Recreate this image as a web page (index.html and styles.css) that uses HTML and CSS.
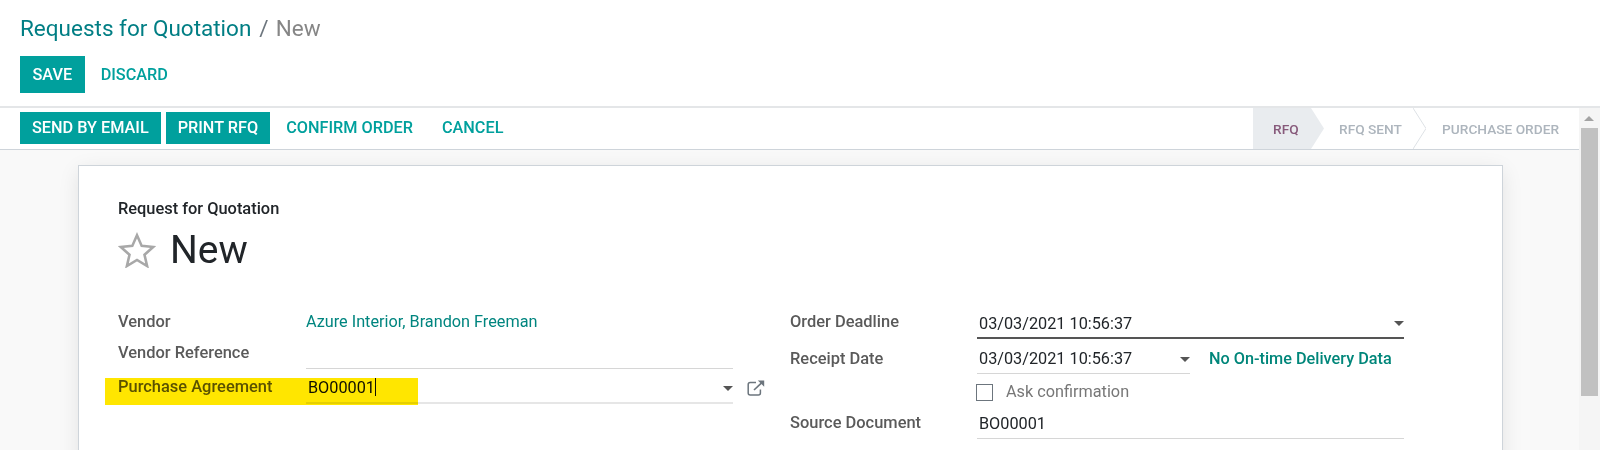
FILE: index.html
```html
<!DOCTYPE html>
<html lang="en">
<head>
<meta charset="utf-8">
<title>Requests for Quotation</title>
<link rel="stylesheet" href="styles.css">
</head>
<body>
<div class="app">
  <header class="control">
    <div class="crumbs"><a class="crumb-link">Requests for Quotation</a><span class="crumb-sep">/</span><span class="crumb-cur">New</span></div>
    <div class="actions">
      <button class="btn primary save">SAVE</button>
      <button class="btn link discard">DISCARD</button>
    </div>
  </header>
  <div class="main">
    <div class="content">
      <div class="statusbar">
        <div class="state-actions">
          <button class="btn primary">SEND BY EMAIL</button>
          <button class="btn primary">PRINT RFQ</button>
          <button class="btn link first-link">CONFIRM ORDER</button>
          <button class="btn link">CANCEL</button>
        </div>
        <div class="steps">
          <div class="step active">RFQ
            <svg class="arrow" viewBox="0 0 13 41" width="13" height="41"><path d="M0 0L13 20.5L0 41Z" fill="#e9ecef"/></svg>
          </div>
          <div class="step middle">RFQ SENT
            <svg class="arrow" viewBox="0 0 13 41" width="13" height="41"><path d="M0 0L13 20.5L0 41" fill="#fff" stroke="#dee2e6"/></svg>
          </div>
          <div class="step last">PURCHASE ORDER</div>
        </div>
      </div>
      <div class="sheet-wrap">
        <section class="sheet">
          <div class="kind">Request for Quotation</div>
          <h1 class="title">
            <svg class="star" viewBox="0 0 38 36" width="38" height="36"><path d="M19 3.2L23.7 13.9L35.2 15L26.5 22.7L29.1 34L19 28L8.9 34L11.5 22.7L2.8 15L14.3 13.9Z" fill="none" stroke="#a8a8a8" stroke-width="2.6" stroke-linejoin="miter"/></svg>
            <span>New</span>
          </h1>
          <div class="columns">
            <div class="col col-left">
              <div class="field f-vendor"><label>Vendor</label><a class="value-link">Azure Interior, Brandon Freeman</a></div>
              <div class="field f-ref"><label>Vendor Reference</label><div class="input"></div></div>
              <div class="field f-agr"><label>Purchase Agreement</label>
                <div class="input thick"><span class="typed">BO00001</span><span class="caret"></span><i class="drop"></i></div>
                <svg class="ext" viewBox="0 0 18 16" width="18" height="16"><path d="M9 2.6H3.2Q1.2 2.6 1.2 4.6V13Q1.2 15 3.2 15H11.4Q13.4 15 13.4 13V9.6" fill="none" stroke="#6c757d" stroke-width="1.5"/><path d="M7 10L15.4 2.2" fill="none" stroke="#6c757d" stroke-width="1.7"/><path d="M10.8 0.6H17.2V6.8Z" fill="#6c757d"/></svg>
              </div>
              <div class="highlight"></div>
            </div>
            <div class="col col-right">
              <div class="field f-deadline"><label>Order Deadline</label><div class="input active">03/03/2021 10:56:37<i class="drop"></i></div></div>
              <div class="field f-receipt"><label>Receipt Date</label>
                <div class="receipt-row">
                  <div class="input short">03/03/2021 10:56:37<i class="drop"></i></div>
                  <a class="ontime">No On-time Delivery Data</a>
                </div>
              </div>
              <div class="field f-ask"><span></span><div class="check"><span class="box"></span><span>Ask confirmation</span></div></div>
              <div class="field f-source"><label>Source Document</label><div class="input">BO00001</div></div>
            </div>
          </div>
        </section>
      </div>
    </div>
    <div class="scrollbar"><i class="up"></i><div class="thumb"></div></div>
  </div>
</div>
</body>
</html>
```
FILE: styles.css
```css
* { box-sizing: border-box; }
html, body { margin: 0; height: 100%; overflow: hidden; }
body { font-family: Roboto, "Noto Sans", sans-serif; font-size: 16.25px; color: #212529; background: #fff; }
.app { height: 450px; display: flex; flex-direction: column; }
.control { height: 108px; flex: none; padding: 14px 20px 0 20px; border-bottom: 2px solid #e4e6e8; background: #fff; }
.crumbs { font-size: 22.5px; line-height: 28px; height: 28px; display: flex; }
.crumb-link { color: #017e84; }
.crumb-sep { color: #6c757d; margin: 0 7px 0 8px; }
.crumb-cur { color: #868686; }
.actions { margin-top: 14px; display: flex; }
.btn { font-family: inherit; font-size: 16.25px; font-weight: 500; border: 0; background: none; padding: 0 12px 1px; cursor: pointer; }
.primary { background: #00a09d; color: #fff; height: 32px; }
.link { color: #00a09d; height: 32px; }
.save { height: 37px; padding: 0 12.5px; }
.discard { height: 37px; margin-left: 4px; padding-bottom: 0; }
.main { flex: 1; display: flex; min-height: 0; }
.content { flex: 1; min-width: 0; display: flex; flex-direction: column; background: #f9f9f9; }
.statusbar { height: 42px; flex: none; background: #fff; border-bottom: 1px solid #ced4da; display: flex; justify-content: space-between; padding-left: 20px; }
.state-actions { display: flex; gap: 5px; padding-top: 4px; align-items: flex-start; }
.first-link { margin-left: -1px; }
.steps { display: flex; height: 41px; font-size: 13.7px; font-weight: 500; color: #adb5bd; }
.step { position: relative; display: flex; align-items: center; }
.step.active { background: #e9ecef; color: #875a7b; width: 58px; padding-left: 20px; }
.step.middle { width: 102px; padding-left: 28px; }
.step.last { padding: 0 20px 0 29px; }
.arrow { position: absolute; left: 100%; top: 0; height: 41px; z-index: 1; }
.sheet-wrap { flex: 1; min-height: 0; overflow: hidden; padding: 15px 76px 0 78px; }
.sheet { background: #fff; border: 1px solid #ced4da; border-bottom: 0; height: 400px; padding: 33px 40px 0 39px; box-shadow: 0 5px 20px -1px rgba(0,0,0,.1); }
.kind { font-size: 16.4px; font-weight: 500; line-height: 20px; color: #212529; }
.title { margin: 7px 0 0 0; font-size: 39px; font-weight: 400; line-height: 48px; height: 48px; display: flex; align-items: center; gap: 14px; color: #212529; }
.columns { display: grid; grid-template-columns: 652px 614px; gap: 20px; margin-top: 36px; }
.col { position: relative; }
.field { display: grid; align-items: start; }
.col-left .field { grid-template-columns: 188px 427px; }
.col-right .field { grid-template-columns: 187px 427px; }
label { font-size: 16.45px; font-weight: 500; color: #5a5a5a; line-height: 22px; }
.value-link { color: #00857f; line-height: 22px; margin-top: 1px; }
.input { position: relative; border-bottom: 1px solid #d6d6d6; line-height: 22px; color: #212529; }
.f-vendor { height: 31px; }
.f-vendor label, .f-ref label, .f-deadline label, .f-receipt label { margin-top: 1px; }
.f-ref { height: 28px; }
.f-ref .input { height: 28px; }
.f-agr { position: relative; height: 35px; }
.f-agr .input { height: 35px; border-bottom: 2px solid #e6e6e6; padding: 8px 0 0 2px; }
.f-agr label { margin-top: 7px; }
.typed { color: #111; }
.caret { display: inline-block; width: 1px; height: 18px; background: #111; vertical-align: -3px; }
.drop { position: absolute; right: 0; top: 17px; width: 0; height: 0; border: 5px solid transparent; border-top-color: #555; border-bottom: 0; }
.ext { position: absolute; left: 629px; top: 11px; }
.highlight { position: absolute; left: -13px; top: 68px; width: 313px; height: 27px; background: #ffe600; mix-blend-mode: multiply; }
.f-deadline { height: 37px; }
.f-deadline .input { border-bottom: 2px solid #555; height: 29px; padding: 3px 0 0 2px; }
.f-deadline .drop { top: 11px; }
.receipt-row { display: flex; align-items: flex-start; gap: 19px; }
.short { width: 213px; height: 27px; padding: 1px 0 0 2px; }
.short .drop { top: 10px; }
.ontime { color: #00867a; font-weight: 500; line-height: 22px; white-space: nowrap; padding-top: 1px; }
.f-receipt { height: 34px; }
.f-ask { height: 31px; }
.check { display: flex; align-items: center; gap: 13px; color: #777; line-height: 22px; margin-left: -1px; }
.box { width: 17px; height: 17px; border: 1px solid #6c757d; display: block; }
.f-source .input { padding: 1px 0 0 2px; height: 27px; }
.scrollbar { width: 21px; flex: none; background: #f5f5f5; position: relative; }
.up { position: absolute; left: 5px; top: 8px; width: 0; height: 0; border: 5px solid transparent; border-bottom-color: #a3a3a3; border-top: 0; }
.thumb { position: absolute; left: 2px; right: 2px; top: 20px; height: 268px; background: #c1c1c1; }
```
